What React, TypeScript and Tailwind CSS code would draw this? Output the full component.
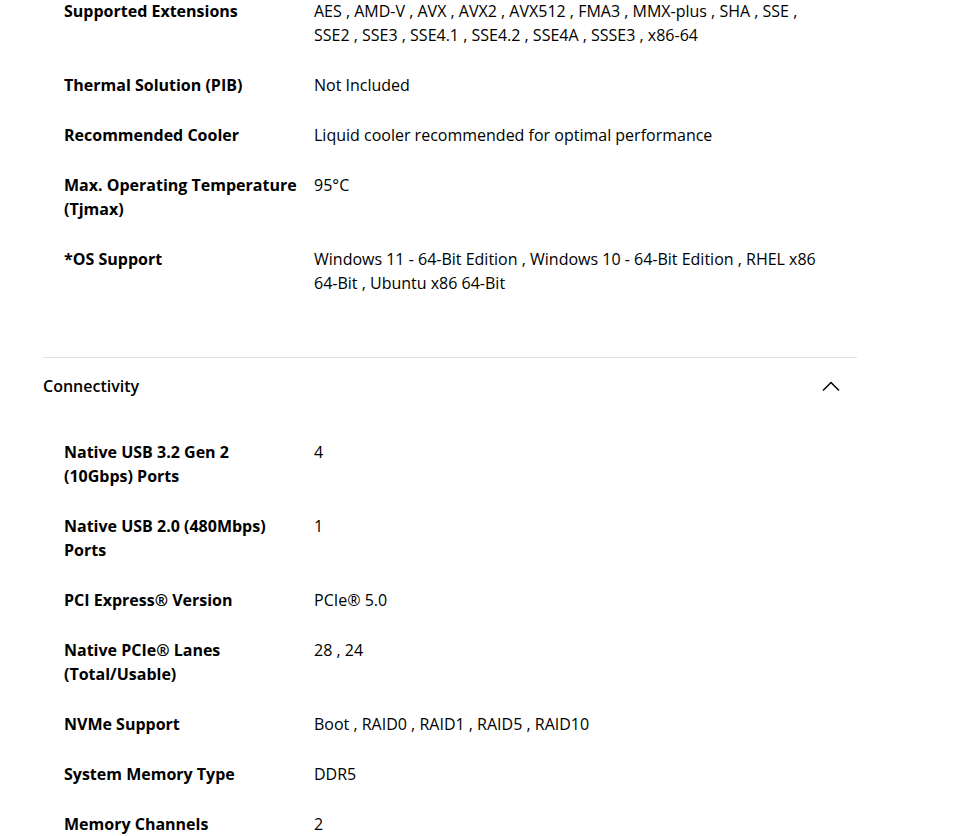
const PROCESSOR = [
  {
    label: 'Supported Extensions',
    value:
      'AES , AMD-V , AVX , AVX2 , AVX512 , FMA3 , MMX-plus , SHA , SSE , SSE2 , SSE3 , SSE4.1 , SSE4.2 , SSE4A , SSSE3 , x86-64',
  },
  { label: 'Thermal Solution (PIB)', value: 'Not Included' },
  { label: 'Recommended Cooler', value: 'Liquid cooler recommended for optimal performance' },
  { label: 'Max. Operating Temperature (Tjmax)', value: '95°C' },
  {
    label: '*OS Support',
    value: 'Windows 11 - 64-Bit Edition , Windows 10 - 64-Bit Edition , RHEL x86 64-Bit , Ubuntu x86 64-Bit',
  },
]

const CONNECTIVITY = [
  { label: 'Native USB 3.2 Gen 2 (10Gbps) Ports', value: '4' },
  { label: 'Native USB 2.0 (480Mbps) Ports', value: '1' },
  { label: 'PCI Express® Version', value: 'PCIe® 5.0' },
  { label: 'Native PCIe® Lanes (Total/Usable)', value: '28 , 24' },
  { label: 'NVMe Support', value: 'Boot , RAID0 , RAID1 , RAID5 , RAID10' },
  { label: 'System Memory Type', value: 'DDR5' },
  { label: 'Memory Channels', value: '2' },
]

function SpecRow({ label, value }: { label: string; value: string }) {
  return (
    <div className="flex py-[13px] pl-[21px]">
      <div className="w-[250px] shrink-0 pr-4 font-bold">{label}</div>
      <div className="w-[516px]">{value}</div>
    </div>
  )
}

export default function App() {
  return (
    <div
      className="w-full h-[836px] overflow-hidden bg-white text-black text-[16px] leading-[24px]"
      style={{ fontFamily: '"Open Sans", "Liberation Sans", sans-serif' }}
    >
      <div className="ml-[43px] w-[814px]">
        {/* Processor specs (scrolled) */}
        <div className="-mt-[14px] pb-[49px]">
          {PROCESSOR.map((row) => (
            <SpecRow key={row.label} {...row} />
          ))}
        </div>

        {/* Connectivity */}
        <div className="border-t border-[#e0e0e0]">
          <div className="flex items-center justify-between pt-4 pb-4 pr-[17px]">
            <span className="font-semibold">Connectivity</span>
            <svg width="18" height="12" viewBox="0 0 18 12" fill="none">
              <polyline points="1,10.5 9,2.5 17,10.5" stroke="#000" strokeWidth="1.5" />
            </svg>
          </div>
          <div className="pt-[13px]">
            {CONNECTIVITY.map((row) => (
              <SpecRow key={row.label} {...row} />
            ))}
          </div>
        </div>
      </div>
    </div>
  )
}
